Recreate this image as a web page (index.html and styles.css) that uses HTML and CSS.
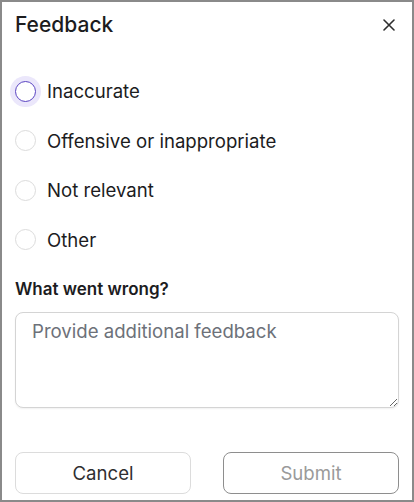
FILE: index.html
```html
<!DOCTYPE html>
<html lang="en">
<head>
  <meta charset="UTF-8">
  <title>Feedback</title>
  <link rel="stylesheet" href="styles.css">
</head>
<body>
  <div class="dialog">
    <div class="dialog-header">
      <h1>Feedback</h1>
      <button class="close-btn" type="button" aria-label="Close">
        <svg width="12" height="12" viewBox="0 0 12 12">
          <path d="M1 1 L11 11 M11 1 L1 11" stroke="#2e2e2e" stroke-width="1.6" stroke-linecap="round" fill="none"/>
        </svg>
      </button>
    </div>

    <form id="feedbackForm">
      <div class="options">
        <label class="option">
          <input type="radio" name="reason" value="inaccurate" class="focused">
          <span>Inaccurate</span>
        </label>
        <label class="option">
          <input type="radio" name="reason" value="offensive">
          <span>Offensive or inappropriate</span>
        </label>
        <label class="option">
          <input type="radio" name="reason" value="irrelevant">
          <span>Not relevant</span>
        </label>
        <label class="option">
          <input type="radio" name="reason" value="other">
          <span>Other</span>
        </label>
      </div>

      <label for="details" class="field-label">What went wrong?</label>
      <textarea id="details" placeholder="Provide additional feedback"></textarea>

      <div class="actions">
        <button type="button" class="btn btn-cancel">Cancel</button>
        <button type="submit" class="btn btn-submit" disabled>Submit</button>
      </div>
    </form>
  </div>
</body>
</html>
```

FILE: styles.css
```css
html, body {
  margin: 0;
  padding: 0;
}

body {
  font-family: Inter, 'Noto Sans', sans-serif;
  color: #1c1c1e;
  background: #fff;
}

.dialog {
  box-sizing: border-box;
  width: 414px;
  height: 502px;
  border: 2px solid #8a8a8a;
  padding: 8px 13px 0;
}

.dialog-header {
  display: flex;
  align-items: center;
  justify-content: space-between;
  height: 30px;
}

.dialog-header h1 {
  margin: 0;
  font-size: 21px;
  font-weight: 500;
  line-height: 30px;
}

.close-btn {
  display: flex;
  align-items: center;
  justify-content: center;
  width: 24px;
  height: 24px;
  margin-right: -2px;
  padding: 0;
  border: none;
  background: none;
  cursor: pointer;
}

.options {
  display: flex;
  flex-direction: column;
  gap: 19.5px;
  margin-top: 36px;
}

.option {
  display: flex;
  align-items: center;
  height: 30px;
  font-size: 18.6px;
  cursor: pointer;
}

.option input {
  appearance: none;
  box-sizing: border-box;
  width: 21px;
  height: 21px;
  margin: 0 11px 0 0;
  border: 1.5px solid #dcdcdc;
  border-radius: 50%;
  background: #fff;
}

.option input.focused {
  border-color: #5a44c2;
  box-shadow: 0 0 0 5px #ebe7fb;
}

.field-label {
  display: block;
  margin-top: 22px;
  font-size: 17px;
  font-weight: 600;
  line-height: 24px;
}

textarea {
  display: block;
  box-sizing: border-box;
  width: 100%;
  height: 96px;
  margin-top: 11.5px;
  padding: 5px 16px;
  border: 1px solid #d4d4d4;
  border-radius: 8px;
  font-family: inherit;
  font-size: 18.6px;
  line-height: 27px;
  color: #1c1c1e;
  box-shadow: 0 1px 2px rgba(0, 0, 0, 0.06);
}

textarea::placeholder {
  color: #6d7179;
}

.actions {
  display: flex;
  gap: 32px;
  margin-top: 44px;
}

.btn {
  flex: 1;
  height: 42px;
  border-radius: 8px;
  background: #fff;
  font-family: inherit;
  font-size: 18.6px;
  cursor: pointer;
}

.btn-cancel {
  border: 1px solid #dcdcdc;
  color: #2f2f31;
}

.btn-submit {
  border: 1.5px solid #8e8e8e;
  color: #9a9a9a;
  cursor: default;
}
```
